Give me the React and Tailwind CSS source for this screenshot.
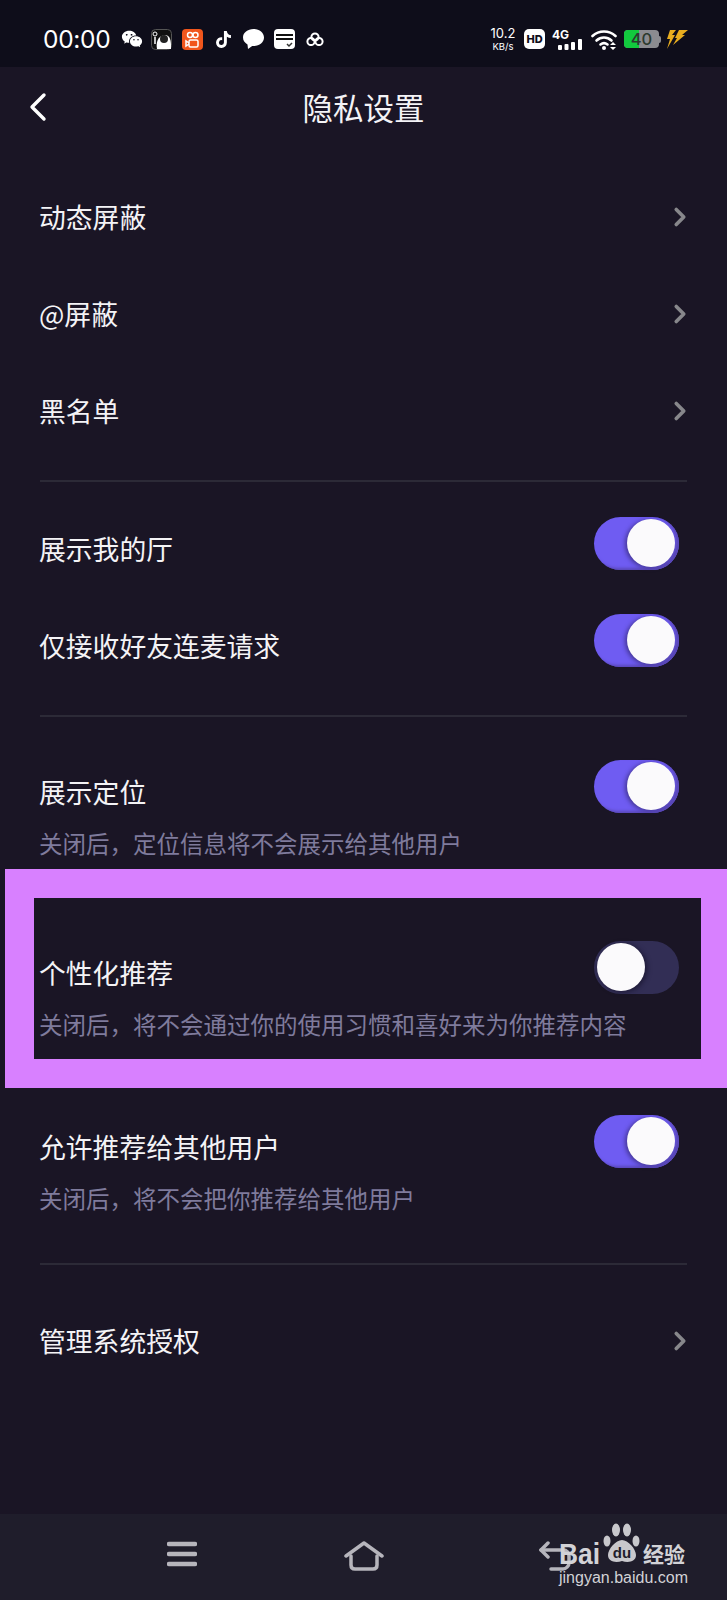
import { ChevronRight, ChevronLeft } from "lucide-react";
import { RiWechatFill } from "react-icons/ri";
import { FaTiktok } from "react-icons/fa";

const cjk = { fontFamily: '"Noto Sans CJK SC", "Noto Sans", sans-serif' };

const Toggle = ({ on = true }) => {
  if (on) {
    return (
      <div className="relative h-[53px] w-[85px] shrink-0 rounded-full bg-[#6f5cf2] shadow-[inset_-3px_-2px_3px_#5a48b8]">
        <div className="absolute right-[4px] top-[2px] h-[48px] w-[48px] rounded-full bg-[#fbfafc] shadow-[-2px_1px_4px_rgba(40,30,90,0.6)]" />
      </div>
    );
  }
  return (
    <div className="relative h-[53px] w-[85px] shrink-0 rounded-full bg-[#322e55]">
      <div className="absolute left-[3px] top-[2px] h-[48px] w-[48px] rounded-full bg-[#fbfafc] shadow-[2px_1px_5px_rgba(20,15,40,0.7)]" />
    </div>
  );
};

const LinkRow = ({ title }) => (
  <div className="flex h-[97px] items-center justify-between">
    <span className="-ml-px mb-[2px] text-[26.8px] text-[#f4f3f6]">{title}</span>
    <ChevronRight size={30} strokeWidth={2.9} className="-mr-[8px] mb-[3px] text-[#87878b]" />
  </div>
);

const ToggleRow = ({ title, desc, on, className = "" }) => (
  <div className={`flex items-start justify-between ${className}`}>
    <div className="-ml-px min-w-0 flex-1 pt-[12px]">
      <div className="h-[40px] text-[26.8px] leading-[40px] text-[#f4f3f6]">{title}</div>
      {desc && (
        <div className="mt-[14px] h-[34px] whitespace-nowrap text-[23.5px] leading-[34px] text-[#7f7b9c]">{desc}</div>
      )}
    </div>
    <Toggle on={on} />
  </div>
);

const Divider = ({ className = "" }) => <div className={`h-[2px] bg-[#2c2a37] ${className}`} />;

const StatusBar = () => (
  <div className="flex h-[67px] items-center bg-[#0e0d1a] pl-[43px] pt-[11px] text-white">
    <span className="w-[64px] text-[24.5px] leading-none tracking-[-0.3px]" style={{ fontFamily: "Inter, sans-serif" }}>
      00:00
    </span>
    <RiWechatFill size={22} className="ml-[14px]" />
    <svg width="22" height="21" viewBox="0 0 22 21" className="ml-[8px]">
      <rect x="0.5" y="0.5" width="20" height="20" rx="4" fill="#111" stroke="#555" />
      <path d="M6 20c-1-6 0-13 8-14 5 0 6 6 6 10v4z" fill="#fff" />
      <circle cx="13" cy="10" r="4" fill="#222" />
      <circle cx="4" cy="5" r="2" fill="none" stroke="#fff" />
      <path d="M4 8v7" stroke="#fff" strokeWidth="1.5" />
    </svg>
    <svg width="21" height="21" viewBox="0 0 21 21" className="ml-[9px]">
      <rect width="21" height="21" rx="4" fill="#f1561c" />
      <circle cx="8" cy="6" r="2.5" fill="none" stroke="#fff" strokeWidth="1.5" />
      <circle cx="13.5" cy="6" r="2.5" fill="none" stroke="#fff" strokeWidth="1.5" />
      <rect x="7" y="11" width="9" height="7" rx="1.5" fill="none" stroke="#fff" strokeWidth="1.5" />
      <path d="M7 14l-3-2v5l3-2" fill="none" stroke="#fff" strokeWidth="1.5" />
    </svg>
    <FaTiktok size={17} className="ml-[12px]" />
    <svg width="21" height="20" viewBox="0 0 21 20" className="ml-[11px]">
      <path d="M10.5 0C4.7 0 0 3.6 0 8.5c0 3 1.8 5.4 4.5 6.9L5 20l4.2-3.1c.4 0 .9.1 1.3.1 5.8 0 10.5-3.6 10.5-8.500S16.300 0 10.500 0z" fill="#fff" />
    </svg>
    <svg width="21" height="20" viewBox="0 0 21 20" className="ml-[10px]">
      <rect width="21" height="20" rx="4" fill="#fff" />
      <rect x="2" y="5" width="17" height="2" fill="#111" />
      <rect x="2" y="9" width="17" height="2" fill="#111" />
      <path d="M13 15l2 2 3-3" fill="none" stroke="#333" strokeWidth="1.5" />
    </svg>
    <svg width="18" height="14" viewBox="0 0 18 14" className="ml-[11px]">
      <g fill="none" stroke="#fff" strokeWidth="2">
        <circle cx="9" cy="5" r="3.6" />
        <circle cx="5" cy="9.500" r="3.600" />
        <circle cx="13" cy="9.500" r="3.600" />
      </g>
    </svg>
    <div className="ml-[167px] flex w-[24px] flex-col items-center leading-none" style={{ fontFamily: "Inter, sans-serif" }}>
      <span className="text-[13px]">10.2</span>
      <span className="mt-[2px] text-[9.500px]">KB/s</span>
    </div>
    <div
      className="ml-[9px] flex h-[20px] w-[21px] items-center justify-center rounded-[5px] bg-white text-[11px] font-extrabold text-[#0e0d1a]"
      style={{ fontFamily: "Inter, sans-serif" }}
    >
      HD
    </div>
    <div className="relative ml-[7px] h-[21px] w-[30px]">
      <span className="absolute left-0 top-0 text-[12px] font-bold leading-[11px]" style={{ fontFamily: "Inter, sans-serif" }}>
        4G
      </span>
      <svg width="24" height="11" viewBox="0 0 24 11" className="absolute bottom-0 right-0">
        <rect x="0" y="6" width="4" height="5" rx="1" fill="#fff" />
        <rect x="6.500" y="5" width="4" height="6" rx="1" fill="#fff" />
        <rect x="13" y="3" width="4" height="8" rx="1" fill="#fff" />
        <rect x="20" y="0" width="4" height="11" rx="1" fill="#fff" />
      </svg>
    </div>
    <svg width="27" height="21" viewBox="0 0 27 21" className="ml-[9px]">
      <g fill="none" stroke="#fff" strokeWidth="2.600" strokeLinecap="round">
        <path d="M1.500 7C8 1 18 1 24.500 7" />
        <path d="M5.500 11.500C10 7.500 16 7.500 20.500 11.500" />
        <path d="M9.500 15.500C11.500 14 14.500 14 16.500 15.500" />
      </g>
      <circle cx="13" cy="19" r="2" fill="#fff" />
      <path d="M19 16l3-3 3 3zM19 18l3 3 3-3z" fill="#fff" />
    </svg>
    <div className="relative ml-[6px] flex h-[18px] w-[35px] overflow-hidden rounded-[4px] bg-[#8b8b90]">
      <div className="h-full w-[15px] bg-[#12c93e]" />
      <span
        className="absolute inset-0 text-center text-[16.5px] font-medium leading-[18px] text-[#2c3a2e]"
        style={{ fontFamily: "Inter, sans-serif" }}
      >
        40
      </span>
    </div>
    <div className="h-[7px] w-[2px] rounded-r-sm bg-[#8b8b90]" />
    <svg width="22" height="19" viewBox="0 0 22 19" className="ml-[5px]">
      <path d="M4 0h6L6 5h3L1 19l3-10H1z" fill="#e8ad1f" />
      <path d="M13 0h9l-6 5h3L7 15l4-7H9z" fill="#e8ad1f" />
    </svg>
  </div>
);

const Header = () => (
  <div className="relative flex h-[83px] items-center justify-center">
    <ChevronLeft size={48} strokeWidth={1.7} className="absolute left-[14px] top-[16px] text-white" />
    <span className="mb-[2px] text-[30.5px] text-[#f4f3f6]">隐私设置</span>
  </div>
);

const Watermark = () => (
  <div className="absolute left-[559px] top-[1522px] h-[66px] w-[132px] text-[#d2d2d6]">
    <span
      className="absolute left-0 top-[15px] origin-left scale-x-[0.88] text-[30px] font-bold leading-[34px]"
      style={{ fontFamily: '"Liberation Sans", sans-serif' }}
    >
      Bai
    </span>
    <svg width="40" height="42" viewBox="0 0 40 42" className="absolute left-[43px] top-0">
      <g fill="#c8c8cc">
        <ellipse cx="5" cy="19" rx="3.500" ry="5.500" />
        <ellipse cx="14" cy="8" rx="4" ry="6.500" />
        <ellipse cx="25" cy="8" rx="4" ry="6.500" />
        <ellipse cx="34" cy="19" rx="3.500" ry="5.500" />
        <path d="M20 18c6 0 14 9 14 15 0 7-8 8-14 6-6 2-14 1-14-6 0-6 8-15 14-15z" />
      </g>
      <text x="20" y="36" textAnchor="middle" fontSize="15" fontWeight="700" fill="#1f1d2b" fontFamily="Liberation Sans">
        du
      </text>
    </svg>
    <span className="absolute left-[84px] top-[19px] text-[21px] font-bold leading-[24px]" style={cjk}>
      经验
    </span>
    <span
      className="absolute left-0 top-[46px] whitespace-nowrap text-[16px] leading-[20px]"
      style={{ fontFamily: '"Liberation Sans", sans-serif' }}
    >
      jingyan.baidu.com
    </span>
  </div>
);

const BottomNav = () => (
  <div className="relative flex h-[86px] items-start bg-[#1f1d2b] pl-[167px] pt-[27px] text-[#b6b5bc]">
    <svg width="30" height="26" viewBox="0 0 30 26">
      <g stroke="currentColor" strokeWidth="4.500" strokeLinecap="round">
        <path d="M2 3h26M2 13h26M2 23h26" />
      </g>
    </svg>
    <svg width="40" height="30" viewBox="0 0 40 30" className="ml-[147px]">
      <g fill="none" stroke="currentColor" strokeWidth="3.500" strokeLinecap="round" strokeLinejoin="round">
        <path d="M2 15L20 2l18 13" />
        <path d="M7 15v9c0 3 2 4 4 4h18c2 0 4-1 4-4v-9" />
      </g>
    </svg>
    <svg width="32" height="30" viewBox="0 0 32 30" className="ml-[155px]">
      <g fill="none" stroke="currentColor" strokeWidth="3.500" strokeLinecap="round" strokeLinejoin="round">
        <path d="M2 9h22c4 0 6 3 6 6v7c0 3-3 6-6 6H12" />
        <path d="M9 2L2 9l7 7" />
      </g>
    </svg>
  </div>
);

export default function App() {
  return (
    <div className="relative flex h-[1600px] w-[727px] flex-col overflow-hidden bg-[#1a1525]" style={cjk}>
      <StatusBar />
      <Header />
      <div className="flex-1 px-[40px]">
        <div className="pt-[20px]">
          <LinkRow title="动态屏蔽" />
          <LinkRow title="@屏蔽" />
          <LinkRow title="黑名单" />
        </div>
        <Divider className="mt-[19px]" />
        <ToggleRow title="展示我的厅" className="mt-[35px] h-[97px] pr-[8px]" />
        <ToggleRow title="仅接收好友连麦请求" className="h-[97px] pr-[8px]" />
        <Divider className="mt-[4px]" />
        <ToggleRow title="展示定位" desc="关闭后，定位信息将不会展示给其他用户" className="mt-[43px] pr-[8px]" />
        <div className="-ml-[35px] -mr-[40px] mt-[9px] border-y-[29px] border-l-[29px] border-r-[26px] border-[#d880ff]">
          <ToggleRow
            title="个性化推荐"
            desc="关闭后，将不会通过你的使用习惯和喜好来为你推荐内容"
            on={false}
            className="pb-[18px] pl-[6px] pr-[22px] pt-[43px]"
          />
        </div>
        <ToggleRow title="允许推荐给其他用户" desc="关闭后，将不会把你推荐给其他用户" className="mt-[27px] pr-[8px]" />
        <Divider className="mt-[48px]" />
        <div className="mt-[29px]">
          <LinkRow title="管理系统授权" />
        </div>
      </div>
      <BottomNav />
      <Watermark />
    </div>
  );
}
